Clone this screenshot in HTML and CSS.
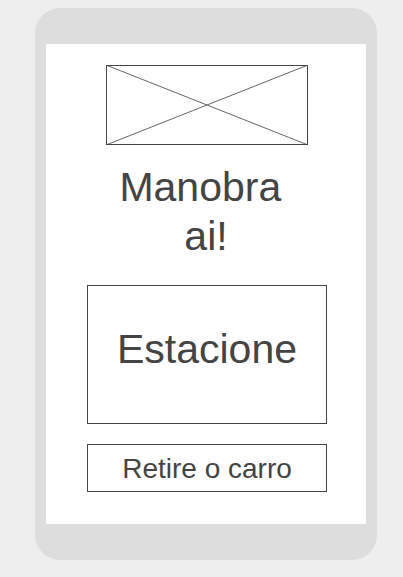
FILE: index.html
```html
<!DOCTYPE html>
<html>
<head>
<meta charset="utf-8">
<link rel="stylesheet" href="styles.css">
</head>
<body>
<div class="phone">
  <div class="screen">
    <div class="placeholder">
      <svg width="202" height="80" viewBox="0 0 202 80" preserveAspectRatio="none">
        <line x1="0" y1="0" x2="202" y2="80" stroke="#666" stroke-width="1"/>
        <line x1="202" y1="0" x2="0" y2="80" stroke="#666" stroke-width="1"/>
      </svg>
    </div>
    <h1 class="title">Manobra ai!</h1>
    <div class="btn btn-big">Estacione</div>
    <div class="btn btn-small">Retire o carro</div>
  </div>
</div>
</body>
</html>
```
FILE: styles.css
```css
html, body {
  margin: 0;
  padding: 0;
  background: #eeeeee;
  font-family: "Liberation Sans", Arial, sans-serif;
  color: #444444;
}
.phone {
  box-sizing: border-box;
  width: 342px;
  height: 552px;
  margin: 8px 0 0 35px;
  background: #dddddd;
  border-radius: 25px;
  padding: 36px 11px;
}
.screen {
  background: #ffffff;
  height: 100%;
  display: flex;
  flex-direction: column;
  align-items: center;
  padding-top: 21px;
  box-sizing: border-box;
}
.placeholder {
  box-sizing: border-box;
  width: 202px;
  height: 80px;
  border: 1px solid #444;
  position: relative;
  margin-left: 2px;
  overflow: hidden;
}
.placeholder svg {
  position: absolute;
  left: -1px;
  top: -1px;
}
.title {
  margin: 18px 0 0 0;
  width: 190px;
  font-size: 41px;
  font-weight: normal;
  line-height: 49px;
  text-align: center;
  white-space: break-spaces;
}
.btn {
  box-sizing: border-box;
  width: 240px;
  border: 1px solid #444;
  display: flex;
  align-items: center;
  justify-content: center;
  margin-left: 2px;
}
.btn-big {
  height: 139px;
  margin-top: 24px;
  padding-bottom: 10px;
  font-size: 41px;
}
.btn-small {
  height: 48px;
  margin-top: 20px;
  padding-top: 2px;
  font-size: 28px;
}
```
